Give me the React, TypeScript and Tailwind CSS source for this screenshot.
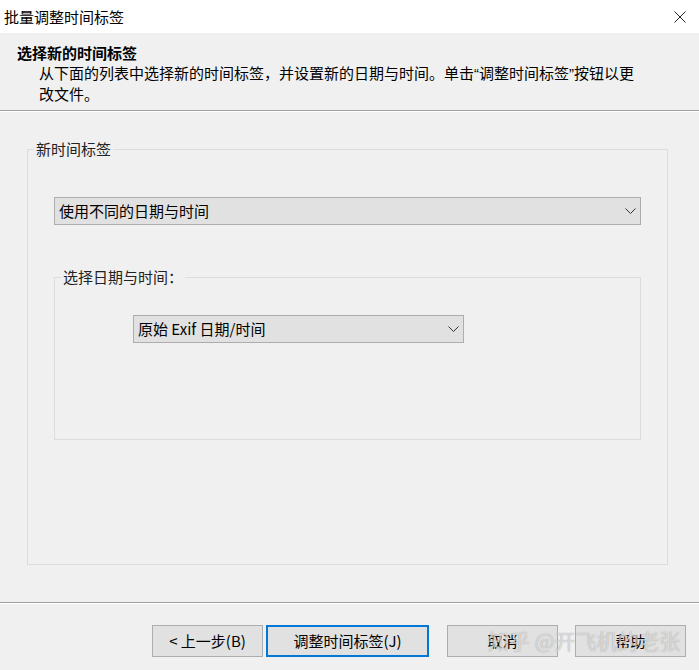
import React from 'react';

const font = '[font-family:"Noto_Sans_CJK_SC","Noto_Sans",sans-serif]';

const Chevron = () => (
  <svg width="11" height="6" viewBox="0 0 11 6" fill="none" className="shrink-0">
    <path d="M0.5 0.5 L5.5 5.5 L10.5 0.5" stroke="#333" strokeWidth="1" />
  </svg>
);

const Dropdown = ({ label, className }: { label: string; className: string }) => (
  <div
    className={`flex h-[28px] items-center justify-between border border-[#adadad] bg-[#e1e1e1] pr-[4px] pl-[4px] text-[15px] leading-[20px] text-black ${className}`}
  >
    <span>{label}</span>
    <Chevron />
  </div>
);

const WizardButton = ({ label, primary }: { label: string; primary?: boolean }) => (
  <button
    className={`flex h-[32px] items-center justify-center bg-[#e1e1e1] text-[15px] text-black ${
      primary ? 'w-[163px] border-2 border-[#0078d7]' : 'w-[111px] border border-[#adadad]'
    }`}
  >
    {label}
  </button>
);

// narrow quote marks, as the dialog font draws them
const Q = ({ c }: { c: string }) => <span className='[font-family:"Liberation_Sans",sans-serif]'>{c}</span>;

const App = () => {
  return (
    <div className={`relative flex h-[670px] w-[699px] flex-col bg-[#f0f0f0] text-black ${font}`}>
      {/* title bar */}
      <div className="flex h-[33px] shrink-0 items-center justify-between bg-white pr-[13px] pl-[4px]">
        <span className="text-[15px] leading-[20px]">批量调整时间标签</span>
        <svg width="12" height="12" viewBox="0 0 12 12" fill="none">
          <path d="M0.5 0.5 L11.5 11.5 M11.5 0.5 L0.5 11.5" stroke="#222" strokeWidth="1" />
        </svg>
      </div>

      {/* header */}
      <div className="flex h-[77px] shrink-0 flex-col pt-[10px] pl-[17px] text-[15px] leading-[20px]">
        <span className="font-bold">选择新的时间标签</span>
        <p className="pl-[22px]">
          从下面的列表中选择新的时间标签，并设置新的日期与时间。单击<Q c="“" />调整时间标签<Q c="”" />按钮以更
          <br />
          改文件。
        </p>
      </div>
      <div className="h-px shrink-0 bg-[#a0a0a0]" />
      <div className="h-px shrink-0 bg-white" />

      {/* body */}
      <div className="h-[490px] shrink-0 pt-[27px] pl-[27px]">
        <fieldset className="h-[426px] w-[638px] border border-[#dcdcdc]">
          <legend className="ml-[6px] px-[2px] text-[15px] leading-[20px] text-[#222]">新时间标签</legend>
          <div className="px-[26px]">
            <Dropdown label="使用不同的日期与时间" className="mt-[38px] w-[587px]" />
            <fieldset className="mt-[42px] h-[173px] w-[587px] border border-[#dcdcdc]">
              <legend className="ml-[6px] px-[2px] text-[15px] leading-[20px] text-[#222]">选择日期与时间：</legend>
              <Dropdown label="原始 Exif 日期/时间" className="mt-[28px] ml-[78px] w-[331px]" />
            </fieldset>
          </div>
        </fieldset>
      </div>

      <div className="h-px shrink-0 bg-[#a0a0a0]" />
      <div className="h-px shrink-0 bg-white" />

      {/* footer */}
      <div className="flex items-start pt-[21px] pl-[152px]">
        <WizardButton label="< 上一步(B)" />
        <div className="w-[3px]" />
        <WizardButton label="调整时间标签(J)" primary />
        <div className="w-[18px]" />
        <WizardButton label="取消" />
        <div className="w-[17px]" />
        <WizardButton label="帮助" />
      </div>

      {/* watermark */}
      <span className="pointer-events-none absolute top-[627px] left-[488px] text-[21px] leading-[26px] text-white/60 [text-shadow:0_0_1px_rgba(90,90,90,0.6)]">
        知乎 @开飞机的老张
      </span>
    </div>
  );
};

export default App;
